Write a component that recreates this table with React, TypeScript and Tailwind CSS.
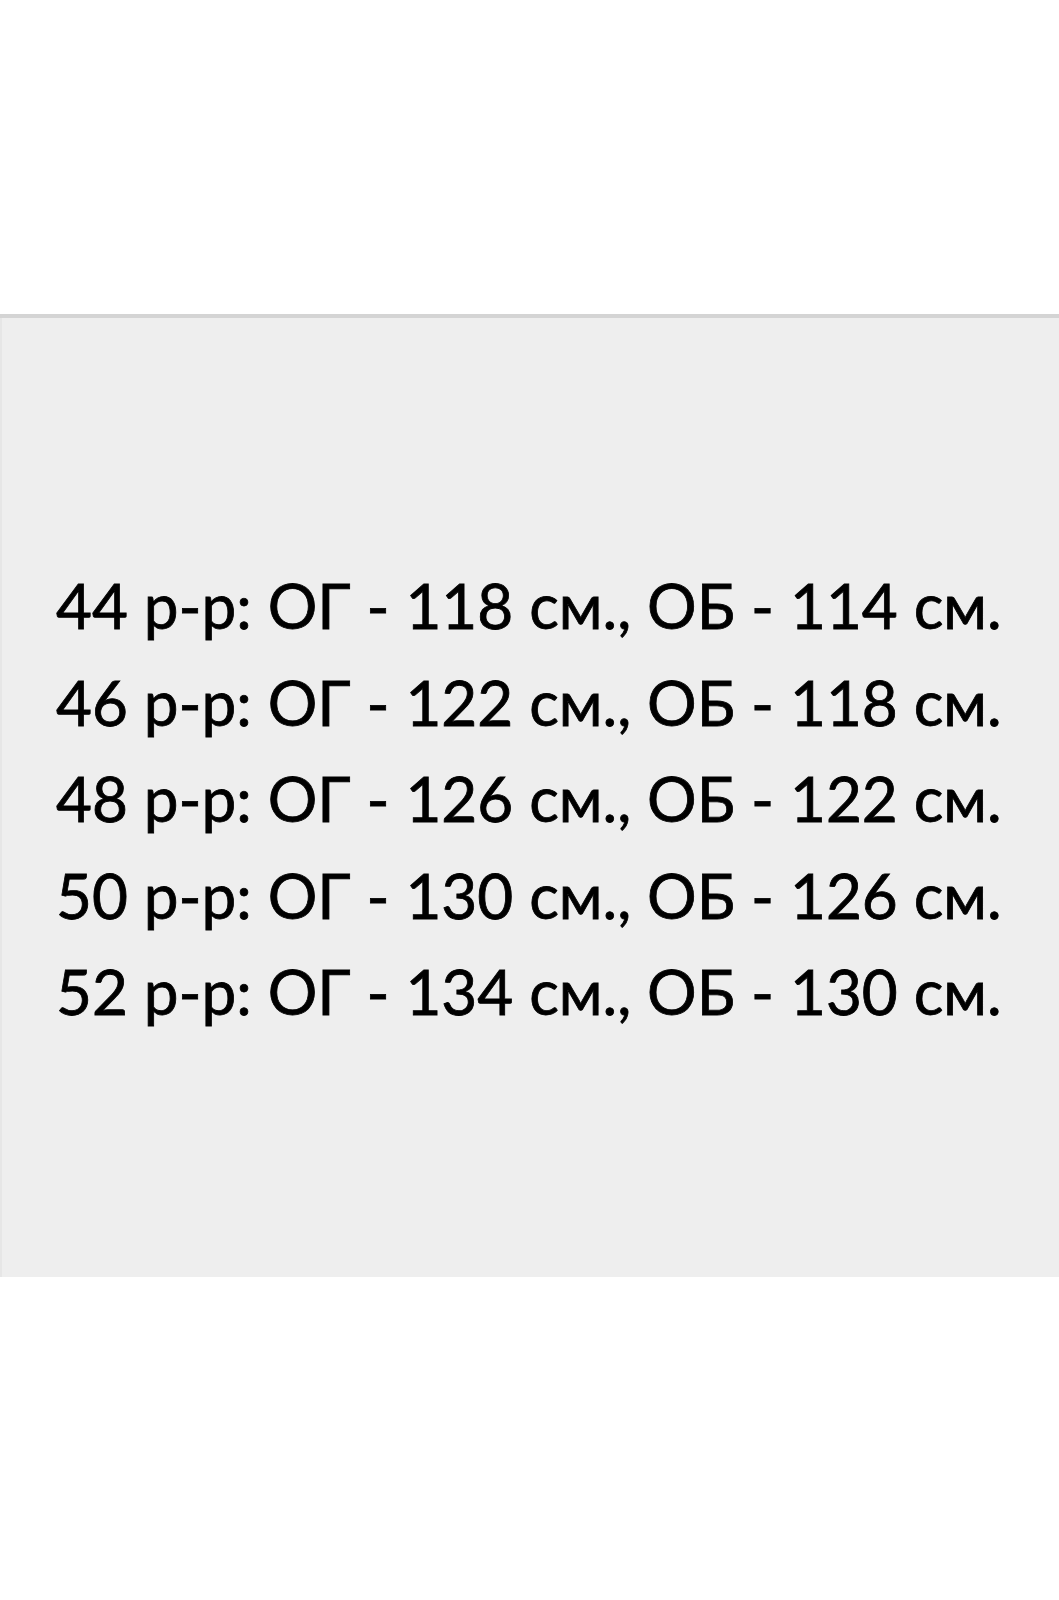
export default function App() {
  const lines = [
    "44 р-р: ОГ - 118 см., ОБ - 114 см.",
    "46 р-р: ОГ - 122 см., ОБ - 118 см.",
    "48 р-р: ОГ - 126 см., ОБ - 122 см.",
    "50 р-р: ОГ - 130 см., ОБ - 126 см.",
    "52 р-р: ОГ - 134 см., ОБ - 130 см.",
  ];
  return (
    <div className="w-[1059px] h-[1600px] bg-white flex flex-col">
      <div className="h-[314px] shrink-0" />
      <div className="h-[4px] bg-[#d4d4d4] shrink-0" />
      <div className="h-[959px] shrink-0 bg-[#eeeeee] border-l-2 border-[#e6e6e6] flex flex-col pt-[239px] pl-[54px]">
        {lines.map((l) => (
          <div
            key={l}
            className="text-[62px] leading-[96.5px] text-black whitespace-nowrap [-webkit-text-stroke:0.8px_#000]"
            style={{ fontFamily: "Lato, 'Noto Sans', sans-serif" }}
          >
            {l}
          </div>
        ))}
      </div>
    </div>
  );
}
